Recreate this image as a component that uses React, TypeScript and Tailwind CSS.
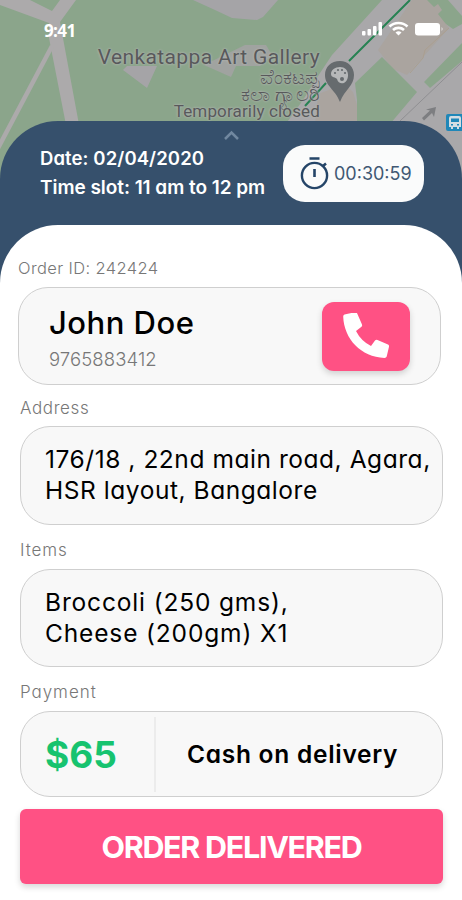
import React from 'react';

const MapBackground: React.FC = () => (
  <svg
    className="absolute left-0 top-0"
    width="462"
    height="300"
    viewBox="0 0 462 300"
  >
    <rect width="462" height="300" fill="#8ba58b" />
    {/* paths on the left */}
    <path d="M0 0H30L52 11L60 0H76L60 22L80 130H67L49 38L49 23L0 5Z" fill="#acaaab" />
    <path d="M52 46L-3 150" stroke="#acaaab" strokeWidth="4.5" />
    {/* buildings */}
    <path d="M193 0H278L263 17L257 20L232 18L215 10Z" fill="#a5a4a7" />
    <path d="M123 70L127 66H157L147 88Z" fill="#a5a4a7" />
    <path d="M204 65L245 45H266L272 55L260 66H236L231 77Z" fill="#a0a3a0" />
    {/* main road */}
    <path d="M382 0H462V300H400L385 125H285L303 100L320 73L332 55Z" fill="#a9a8aa" />
    <path d="M425 0H448L462 16V24L453 29L440 20Z" fill="#8ba58b" />
    <path d="M412 0H427L434 7L438 4L442 10L438 14L449 28L424 56L407 75L393 69L378 50Z" fill="#aaa49f" />
    <path d="M449 28L425 50L423 58L410 73" fill="none" stroke="#aa9f90" />
    <path d="M382 57L417 92L390 124H357V100L355 83Z" fill="#8ba58b" />
    <path d="M424 82L462 43V61L430 88Z" fill="#8ba58b" />
    <path d="M318 94L345 84L353 92L357 105V125H315Z" fill="#aaa49f" />
    <path d="M410 0L349 61M326 83L305 106" stroke="#278253" strokeWidth="2" />
    <path d="M462 62L400 121" stroke="#8f8f92" />
    {/* direction arrow */}
    <path d="M422 118L430 110.500L426 109.500L436 107L434 117L432 113L424 120.500Z" fill="#7d7e81" />
    {/* bus stop */}
    <rect x="446" y="114" width="18" height="17" rx="2" fill="#1f87b8" />
    <path d="M449 118Q449 116 451 116H459Q461 116 461 118V127H459V129H457V127H453V129H451V127H449Z" fill="#d3dde3" />
    <path d="M451 118.500H459V122H451ZM451 124H453V125.500H451ZM457 124H459V125.500H457Z" fill="#1f87b8" />
    {/* gallery pin */}
    <path d="M340 61C331 61 325 67 325 75C325 86 335 89 340 102C345 89 354 86 354 75C354 67 348 61 340 61Z" fill="#666b6e" />
    <path d="M340 67C335 67 331 70 331 74C331 78 336 77 337 79C338 83 341 84 344 83C350 80 350 67 340 67Z" fill="#b6b8b9" />
    <g fill="#666b6e">
      <circle cx="335" cy="73" r="1.1" />
      <circle cx="338" cy="70" r="1.1" />
      <circle cx="342" cy="70" r="1.1" />
      <circle cx="345" cy="73" r="1.1" />
      <circle cx="342" cy="79" r="2" />
    </g>
  </svg>
);

const StatusIcons: React.FC = () => (
  <svg width="84" height="16" viewBox="0 0 84 16" fill="#fff">
    <rect x="1" y="10" width="3.5" height="4.5" rx="1" />
    <rect x="6.5" y="8" width="3.5" height="6.5" rx="1" />
    <rect x="12" y="5" width="3.5" height="9.5" rx="1" />
    <rect x="17.500" y="1" width="3.500" height="13.5" rx="1" />
    <g fill="none" stroke="#fff" strokeWidth="2.6">
      <path d="M28.500 5.500C33.500 .8 41.500 .8 46.500 5.500" />
      <path d="M32 9C35 6.200 40 6.200 43 9" />
    </g>
    <path d="M34.500 11.500Q37.500 9 40.500 11.500L37.500 14.500Z" />
    <rect x="54" y="2" width="25" height="12.5" rx="3" />
    <path d="M80.500 6Q83 8 80.500 10Z" opacity=".6" />
  </svg>
);

const Stopwatch: React.FC = () => (
  <svg width="30" height="34" viewBox="0 0 30 34" fill="none" stroke="#254568">
    <circle cx="14.500" cy="18.500" r="12.600" strokeWidth="2.400" />
    <path d="M9.500 1.500H19.500M14.500 12V20M23 9L26 6.500" strokeWidth="2.600" />
  </svg>
);

interface SectionProps {
  label: string;
  labelClass: string;
  className: string;
  children: React.ReactNode;
}

const Section: React.FC<SectionProps> = ({ label, labelClass, className, children }) => (
  <section>
    <h3 className={`flex h-[18px] items-center font-light leading-[18px] text-[#777] ${labelClass}`}>
      {label}
    </h3>
    <div
      className={`flex w-[423px] items-center rounded-[30px] border border-[#cfcfcf] bg-[#f8f8f8] ${className}`}
    >
      {children}
    </div>
  </section>
);

export default function App() {
  return (
    <main className="relative flex h-[900px] w-[462px] flex-col overflow-hidden whitespace-nowrap bg-white font-['Inter',sans-serif] [font-feature-settings:'cv11']">
      <MapBackground />
      <header className="relative h-[121px] shrink-0">
        <div className="flex items-start justify-between pl-[44px] pr-[17px] pt-[21px]">
          <span className="-mt-px font-['Open_Sans',sans-serif] text-[17px] font-bold leading-[22px] tracking-[-0.6px] text-white">
            9:41
          </span>
          <StatusIcons />
        </div>
        <div className="absolute right-[142px] top-[46px] text-right font-['Roboto',sans-serif] text-[#58595b] [text-shadow:0_0_2px_#b0b3b0,0_0_3px_#b0b3b0]">
          <p className="text-[21px] leading-[23px] tracking-[0.38px]">Venkatappa Art Gallery</p>
          <p className="text-[20px] font-medium leading-[17px]">ವೆಂಕಟಪ್ಪ</p>
          <p className="text-[20px] font-medium leading-[17px]">ಕಲಾ ಗ್ಯಾಲರಿ</p>
          <p className="text-[17px] leading-[17px] tracking-[0.15px]">Temporarily closed</p>
        </div>
      </header>

      <div className="relative flex-1 rounded-t-[58px] bg-[#36506c]">
        <svg className="absolute left-[223px] top-[9px]" width="17" height="11" fill="none" stroke="#7188a0" strokeWidth="2.5">
          <path d="M2 9L8.500 2.500L15 9" />
        </svg>
        <div className="flex h-[104px] items-start justify-between pl-[40px] pr-[38px] pt-[23px] text-white">
          <div className="font-semibold">
            <p className="-mt-px text-[18.5px] leading-[30px] tracking-[0.1px]">Date: 02/04/2020</p>
            <p className="text-[19px] leading-[30px] tracking-[-0.05px]">Time slot: 11 am to 12 pm</p>
          </div>
          <div className="mt-px flex h-[57px] w-[141px] items-center gap-[4px] rounded-[22px] bg-[#fafbfb] pl-[17px] text-[18px] text-[#405873]">
            <Stopwatch />
            <span>00:30:59</span>
          </div>
        </div>

        <div className="flex h-[675px] flex-col rounded-t-[58px] bg-white pl-[20px] pt-[34px]">
          <div className="-ml-[2px]">
            <Section
              label="Order ID: 242424"
              labelClass="text-[16.5px] tracking-[0.38px]"
              className="mt-[10px] h-[98px] justify-between pl-[30px] pr-[30px]"
            >
              <div className="pt-px">
                <p className="text-[31px] font-medium leading-[36px] tracking-[0.5px] text-black">John Doe</p>
                <p className="mt-[8px] text-[18.5px] font-light leading-[20px] tracking-[0.1px] text-[#777]">9765883412</p>
              </div>
              <button className="flex h-[69px] w-[88px] items-center justify-center rounded-[12px] bg-[#ff5184] shadow-[0_3px_6px_rgba(0,0,0,0.16)]">
                <svg width="46" height="46" viewBox="0 0 46 46" fill="#fff">
                  <path d="M1.500 1.500L12 -.8Q13.500 -1 14.200 .5L19 11.500Q19.500 12.800 18.500 13.800L13 18Q18 28 28 33L32 27.500Q33 26.400 34.500 27L45 31.500Q46.300 32.200 46 33.800L43.700 43.500Q43.300 44.900 41.500 44.900C18 44 1 26 .2 3.500Q.2 1.900 1.500 1.500Z" />
                </svg>
              </button>
            </Section>
          </div>
          <div className="mt-[14px]">
            <Section label="Address" labelClass="text-[17px] tracking-[0.6px]" className="mt-[9px] h-[99px] pl-[24px]">
              <p className="-mt-px text-[24.5px] leading-[31px] tracking-[0.55px] text-black">
                176/18 , 22nd main road, Agara,<br />
                HSR layout, Bangalore
              </p>
            </Section>
          </div>
          <div className="mt-[16px]">
            <Section label="Items" labelClass="text-[17px] tracking-[0.9px]" className="mt-[10px] h-[98px] pl-[24px]">
              <p className="-mt-px text-[24.5px] leading-[31px] tracking-[0.85px] text-black">
                Broccoli (250 gms),<br />
                Cheese (200gm) X1
              </p>
            </Section>
          </div>
          <div className="mt-[16px]">
            <Section label="Payment" labelClass="text-[17px] tracking-[0.95px]" className="mt-[10px] h-[86px] pl-[24px]">
              <span className="w-[109px] pt-[2px] text-[37px] font-bold text-[#17c36f]">$65</span>
              <span className="h-[75px] border-l-2 border-[#ececec]" />
              <span className="ml-[31px] text-[24.5px] font-semibold tracking-[0.73px] text-black">Cash on delivery</span>
            </Section>
          </div>
          <button className="mt-[12px] flex h-[75px] w-[423px] shrink-0 items-center justify-center rounded-[6px] bg-[#ff5184] text-[30.5px] font-bold tracking-[-1.3px] text-white shadow-[0_3px_6px_rgba(0,0,0,0.16)]">
            ORDER DELIVERED
          </button>
        </div>
      </div>
    </main>
  );
}
